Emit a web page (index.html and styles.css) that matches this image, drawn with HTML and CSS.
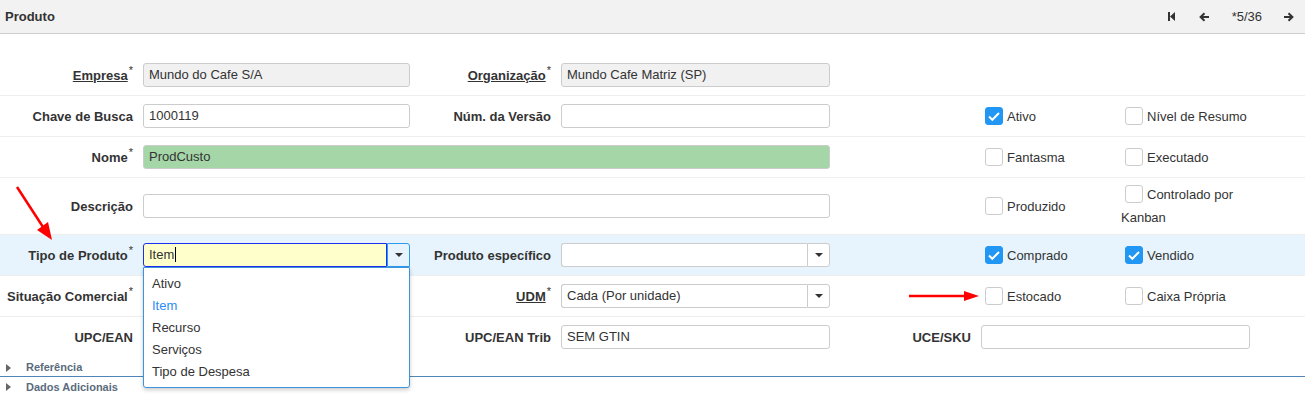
FILE: index.html
```html
<!DOCTYPE html>
<html lang="pt">
<head>
  <meta charset="UTF-8">
  <title>Produto</title>
  <link rel="stylesheet" href="styles.css">
</head>
<body>

  <div class="toolbar">
    <span class="title">Produto</span>
    <div class="nav">
      <svg class="nav-first" width="7" height="9" viewBox="0 0 7 9"><rect x="0" y="0" width="2" height="9" fill="#333"/><polygon points="2,4.5 7,0 7,9" fill="#333"/></svg>
      <svg class="nav-prev" width="11" height="10" viewBox="0 0 11 10"><path d="M10 5H2M5.5 1.2L1.6 5l3.9 3.8" fill="none" stroke="#333" stroke-width="2"/></svg>
      <span class="nav-count">*5/36</span>
      <svg class="nav-next" width="11" height="10" viewBox="0 0 11 10"><path d="M1 5h8M5.5 1.2L9.4 5 5.5 8.8" fill="none" stroke="#333" stroke-width="2"/></svg>
    </div>
  </div>

  <div class="form">
    <div class="row">
      <div class="lbl"><u>Empresa</u><sup>*</sup></div>
      <div class="field"><div class="input readonly">Mundo do Cafe S/A</div></div>
      <div class="lbl"><u>Organização</u><sup>*</sup></div>
      <div class="field"><div class="input readonly">Mundo Cafe Matriz (SP)</div></div>
    </div>

    <div class="row">
      <div class="lbl">Chave de Busca</div>
      <div class="field"><div class="input">1000119</div></div>
      <div class="lbl">Núm. da Versão</div>
      <div class="field"><div class="input"></div></div>
      <div class="checks">
        <div class="chk"><span class="box on"></span>Ativo</div>
        <div class="chk"><span class="box"></span>Nível de Resumo</div>
      </div>
    </div>

    <div class="row">
      <div class="lbl">Nome<sup>*</sup></div>
      <div class="field wide"><div class="input filled">ProdCusto</div></div>
      <div class="checks">
        <div class="chk"><span class="box"></span>Fantasma</div>
        <div class="chk"><span class="box"></span>Executado</div>
      </div>
    </div>

    <div class="row">
      <div class="lbl">Descrição</div>
      <div class="field wide"><div class="input"></div></div>
      <div class="checks">
        <div class="chk"><span class="box"></span>Produzido</div>
        <div class="chk"><span class="box"></span>Controlado por Kanban</div>
      </div>
    </div>

    <div class="row current">
      <div class="lbl">Tipo de Produto<sup>*</sup></div>
      <div class="field popup-host">
        <div class="combo focus">
          <div class="combo-text">Item<span class="caret"></span></div>
          <div class="combo-btn"><span class="tri"></span></div>
        </div>
        <ul class="popup">
          <li>Ativo</li>
          <li class="hl">Item</li>
          <li>Recurso</li>
          <li>Serviços</li>
          <li>Tipo de Despesa</li>
        </ul>
      </div>
      <div class="lbl">Produto específico</div>
      <div class="field">
        <div class="combo">
          <div class="combo-text"></div>
          <div class="combo-btn"><span class="tri"></span></div>
        </div>
      </div>
      <div class="checks">
        <div class="chk"><span class="box on"></span>Comprado</div>
        <div class="chk"><span class="box on"></span>Vendido</div>
      </div>
    </div>

    <div class="row">
      <div class="lbl">Situação Comercial<sup>*</sup></div>
      <div class="field">
        <div class="combo">
          <div class="combo-text"></div>
          <div class="combo-btn"><span class="tri"></span></div>
        </div>
      </div>
      <div class="lbl"><u>UDM</u><sup>*</sup></div>
      <div class="field">
        <div class="combo">
          <div class="combo-text">Cada (Por unidade)</div>
          <div class="combo-btn"><span class="tri"></span></div>
        </div>
      </div>
      <div class="checks">
        <div class="chk"><span class="box"></span>Estocado</div>
        <div class="chk"><span class="box"></span>Caixa Própria</div>
      </div>
    </div>

    <div class="row last">
      <div class="lbl">UPC/EAN</div>
      <div class="field"><div class="input"></div></div>
      <div class="lbl">UPC/EAN Trib</div>
      <div class="field"><div class="input">SEM GTIN</div></div>
      <div class="lbl">UCE/SKU</div>
      <div class="field"><div class="input"></div></div>
    </div>
  </div>

  <div class="section open">
    <span class="arrow"></span>Referência
  </div>
  <div class="section">
    <span class="arrow"></span>Dados Adicionais
  </div>

  <!-- annotation arrows drawn over the screenshot -->
  <svg class="mark mark-diag" width="60" height="60" viewBox="0 0 60 60">
    <line x1="2" y1="2" x2="28" y2="42" stroke="#f00" stroke-width="2.5"/>
    <polygon points="37,55 22,45 33,37" fill="#f00"/>
  </svg>
  <svg class="mark mark-horiz" width="75" height="12" viewBox="0 0 75 12">
    <line x1="0" y1="6" x2="58" y2="6" stroke="#f00" stroke-width="2.5"/>
    <polygon points="70,6 55,1 55,11" fill="#f00"/>
  </svg>

</body>
</html>
```

FILE: styles.css
```css
body {
  margin: 0;
  font-family: "Liberation Sans", Arial, sans-serif;
  font-size: 13px;
  color: #333;
  background: #fff;
  position: relative;
  overflow: hidden;
}

.toolbar {
  height: 33px;
  background: #f2f2f2;
  border-bottom: 1px solid #cfcfcf;
  display: flex;
  align-items: center;
  justify-content: space-between;
}

.title {
  font-weight: bold;
  padding-left: 5px;
}

.nav {
  display: flex;
  align-items: center;
  padding-right: 11px;
}

.nav-prev { margin-left: 24px; }
.nav-count { margin-left: 22px; }
.nav-next { margin-left: 21px; }

.form {
  padding-top: 21px;
}

.row {
  display: grid;
  grid-template-columns: 143px 267px 151px 269px 151px 269px 1fr;
  align-items: center;
  min-height: 40px;
  border-bottom: 1px solid #eee;
}

.row.last {
  border-bottom: 0;
}

.row.current {
  background: #e7f3fd;
}

.lbl {
  font-weight: bold;
  text-align: right;
  padding-right: 10px;
  white-space: nowrap;
}

.lbl u {
  text-decoration-thickness: 1px;
}

sup {
  font-size: 11px;
  font-weight: normal;
  vertical-align: 6px;
  line-height: 0;
  margin-left: 1px;
}

.field.wide {
  grid-column: span 3;
}

.input {
  box-sizing: border-box;
  height: 24px;
  line-height: 22px;
  border: 1px solid #ccc;
  border-radius: 3px;
  padding: 0 5px;
  background: #fff;
}

.input.readonly { background: #f1f1f1; }
.input.filled { background: #a5d6a7; }

.combo {
  display: flex;
  height: 24px;
}

.combo-text {
  flex: 1;
  box-sizing: border-box;
  line-height: 22px;
  padding: 0 5px;
  border: 1px solid #ccc;
  border-right: 0;
  border-radius: 3px 0 0 3px;
  background: #fff;
}

.combo-btn {
  box-sizing: border-box;
  width: 23px;
  border: 1px solid #ccc;
  border-radius: 0 3px 3px 0;
  background: #fff;
  display: flex;
  align-items: center;
  justify-content: center;
}

.tri {
  width: 0;
  height: 0;
  border-left: 4px solid transparent;
  border-right: 4px solid transparent;
  border-top: 4px solid #333;
}

.combo.focus .combo-text {
  background: #ffffcc;
  border: 1px solid #1a2ff0;
}

.combo.focus .combo-btn {
  background: #e7f3fd;
  border-color: #2d9cf0;
  border-radius: 0 3px 0 0;
}

.caret {
  display: inline-block;
  width: 1px;
  height: 15px;
  background: #000;
  vertical-align: -3px;
  margin-left: 1px;
}

.popup-host {
  position: relative;
}

.popup {
  position: absolute;
  top: 100%;
  left: 0;
  right: 0;
  z-index: 5;
  margin: 0;
  padding: 5px 0 4px;
  list-style: none;
  background: #fff;
  border: 1px solid #3d93dc;
  border-radius: 0 0 3px 3px;
  box-shadow: 0 2px 4px rgba(0, 0, 0, 0.2);
}

.popup li {
  line-height: 22px;
  padding-left: 8px;
}

.popup li.hl {
  color: #2a8cf4;
}

.checks {
  grid-column: 6 / span 2;
  display: flex;
  align-items: center;
}

.chk {
  line-height: 23px;
  padding: 5px 0;
}

.chk:first-child { width: 140px; }
.chk:last-child { width: 129px; }

.box {
  display: inline-block;
  box-sizing: border-box;
  width: 18px;
  height: 18px;
  border: 1px solid #ccc;
  border-radius: 3px;
  background: #fff;
  vertical-align: -4px;
  margin: 0 4px;
}

.box.on {
  background: #2196f3 url("data:image/svg+xml,%3Csvg xmlns='http://www.w3.org/2000/svg' width='18' height='18'%3E%3Cpath d='M4 9.5l3.3 3.3L14 6' fill='none' stroke='white' stroke-width='2'/%3E%3C/svg%3E") center no-repeat;
  border-color: #2196f3;
}

.section {
  height: 20px;
  line-height: 20px;
  font-size: 11px;
  font-weight: bold;
  color: #5a6b7d;
  display: flex;
  align-items: center;
}

.section.open {
  height: 17px;
  line-height: 17px;
  padding-top: 2px;
  border-bottom: 1px solid #4f86b7;
}

.arrow {
  width: 0;
  height: 0;
  border-left: 5px solid #666;
  border-top: 4px solid transparent;
  border-bottom: 4px solid transparent;
  margin: 0 15px 0 6px;
}

.mark {
  position: absolute;
  z-index: 10;
}

.mark-diag { left: 15px; top: 185px; }
.mark-horiz { left: 909px; top: 290px; }
```
